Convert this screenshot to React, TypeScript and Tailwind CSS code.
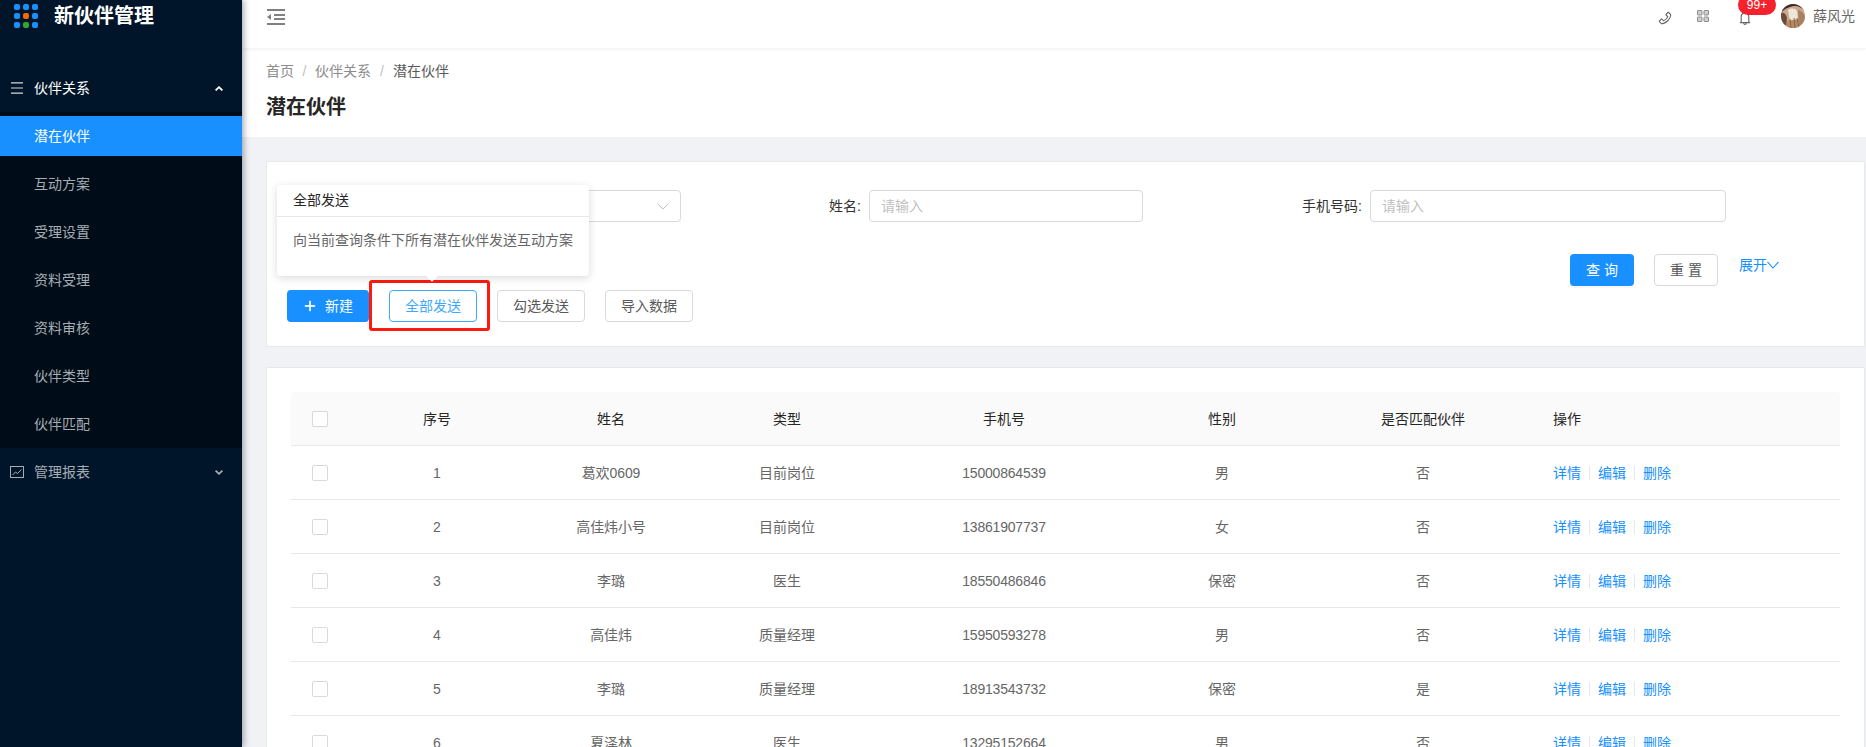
import { AiOutlineBell, AiOutlinePhone, AiOutlinePlus } from "react-icons/ai"

const menuItems = ["潜在伙伴", "互动方案", "受理设置", "资料受理", "资料审核", "伙伴类型", "伙伴匹配"]

const rows = [
  { id: 1, name: "葛欢0609", type: "目前岗位", phone: "15000864539", gender: "男", matched: "否" },
  { id: 2, name: "高佳炜小号", type: "目前岗位", phone: "13861907737", gender: "女", matched: "否" },
  { id: 3, name: "李璐", type: "医生", phone: "18550486846", gender: "保密", matched: "否" },
  { id: 4, name: "高佳炜", type: "质量经理", phone: "15950593278", gender: "男", matched: "否" },
  { id: 5, name: "李璐", type: "质量经理", phone: "18913543732", gender: "保密", matched: "是" },
  { id: 6, name: "夏泽林", type: "医生", phone: "13295152664", gender: "男", matched: "否" },
]

const logoDots = ["#1890ff", "#1890ff", "#1890ff", "#1890ff", "#f56a00", "#1890ff", "#1890ff", "#2ea82e", "#1890ff"]

function Arrow({ up }: { up?: boolean }) {
  return (
    <svg width="8" height="5" viewBox="0 0 8 5" fill="none" stroke="currentColor" strokeWidth="1.8">
      <path d={up ? "M.6 4.4 4 1.2 7.4 4.4" : "M.6.6 4 3.8 7.4.6"} />
    </svg>
  )
}

function Sidebar() {
  return (
    <aside className="relative z-10 w-[242px] shrink-0 bg-[#001529] shadow-[2px_0_6px_rgba(0,21,41,0.35)]">
      <div className="flex h-[64px] items-start pl-[14px] pt-[4px]">
        <div className="grid w-[24px] grid-cols-3 gap-[3px]">
          {logoDots.map((c, i) => (
            <span key={i} className="h-[6px] w-[6px] rounded-[2px]" style={{ background: c }} />
          ))}
        </div>
        <span className="ml-[16px] mt-[-2px] text-[20px] font-bold leading-[28px] text-white">新伙伴管理</span>
      </div>
      <div className="flex h-[48px] items-center pl-[11px] pr-[19px] text-white">
        <svg width="12" height="12" viewBox="0 0 12 12" fill="none" stroke="#d5d8db" strokeWidth="1.2">
          <path d="M0 .8h12M0 6h12M0 11.2h12" />
        </svg>
        <span className="ml-[11px] flex-1 text-[14px]">伙伴关系</span>
        <Arrow up />
      </div>
      <ul className="bg-[#000c17]">
        {menuItems.map((item, i) => (
          <li key={item} className="py-[4px]">
            <div className={`flex h-[40px] items-center pl-[34px] text-[14px] ${i === 0 ? "bg-[#1890ff] text-white" : "text-[#a6adb4]"}`}>
              {item}
            </div>
          </li>
        ))}
      </ul>
      <div className="flex h-[48px] items-center pl-[10px] pr-[19px] text-[#a6adb4]">
        <svg width="14" height="12" viewBox="0 0 14 12" fill="none" stroke="currentColor" strokeWidth="1">
          <rect x=".5" y=".5" width="13" height="11" />
          <path d="M2.5 9 5.5 6 7.5 7.5 11.5 3.5" />
        </svg>
        <span className="ml-[10px] flex-1 text-[14px]">管理报表</span>
        <Arrow />
      </div>
    </aside>
  )
}

function Avatar() {
  return (
    <svg width="24" height="24" viewBox="0 0 24 24" className="rounded-full">
      <rect width="24" height="24" fill="#c9a98c" />
      <path d="M0 0h24v7c-3-3-6-5-10-5S4 4 0 9z" fill="#3d2a2a" />
      <path d="M7 6c3-2 7-2 9 1l1 8-8 2z" fill="#efe6da" />
      <path d="M0 9c3-1 5 1 6 5l-1 10H0z" fill="#6b4a3c" />
      <path d="M17 6c4 1 7 4 7 9v9h-6z" fill="#a8805f" />
      <path d="M6 17l12-2 1 9H5z" fill="#b58a62" />
      <path d="M9 15l1 9M13 14l1 10M16 14l2 9" stroke="#8a6244" strokeWidth="1" fill="none" />
    </svg>
  )
}

function Header() {
  return (
    <header className="relative z-[5] flex h-[48px] shrink-0 items-start justify-between bg-white pl-[25px] pr-[11px] shadow-[0_1px_4px_rgba(0,21,41,0.08)]">
      <div className="flex h-[34px] items-center">
        <svg width="18" height="16" viewBox="0 0 18 16" fill="#808080">
          <rect width="18" height="2" />
          <rect y="14" width="18" height="2" />
          <rect x="7" y="5" width="11" height="2" />
          <rect x="7" y="9" width="11" height="2" />
          <path d="M0 8l4-3v6z" />
        </svg>
      </div>
      <div className="flex h-[32px] items-center text-[#666]">
        <AiOutlinePhone className="mt-[4px] h-[16px] w-[16px]" />
        <svg width="12" height="12" viewBox="0 0 12 12" fill="#cfcfcf" stroke="#8c8c8c" className="ml-[24px]">
          <rect x=".5" y=".5" width="4.5" height="4.5" rx=".5" />
          <rect x="7" y=".5" width="4.5" height="4.5" rx=".5" />
          <rect x=".5" y="7" width="4.5" height="4.5" rx=".5" />
          <rect x="7" y="7" width="4.5" height="4.5" rx=".5" />
        </svg>
        <div className="relative ml-[28px] mt-[4px] h-[16px] w-[16px]">
          <AiOutlineBell className="h-[16px] w-[16px]" />
          <span className="absolute left-[1px] top-[-15px] flex h-[20px] w-[38px] items-center justify-center rounded-full bg-[#f5222d] text-[12px] text-white">
            99+
          </span>
        </div>
        <div className="ml-[28px] h-[24px] w-[24px]">
          <Avatar />
        </div>
        <span className="ml-[8px] text-[14px] text-[#666]">薛风光</span>
      </div>
    </header>
  )
}

function Field({ label, width, outer }: { label: string; width: string; outer: string }) {
  return (
    <div className={`flex items-center justify-end ${outer}`}>
      <label className="mr-[8px] text-[14px] text-[#333]">{label}:</label>
      <input
        placeholder="请输入"
        className={`h-[32px] rounded-[4px] border border-[#d9d9d9] px-[11px] text-[14px] outline-none placeholder:text-[#bfbfbf] ${width}`}
      />
    </div>
  )
}

function FilterCard() {
  return (
    <section className="relative ml-[24px] mr-[1px] mt-[24px] rounded-[2px] border border-[#e8e8e8] bg-white pb-[24px] pt-[28px]">
      <div className="flex">
        <div className="flex w-[414px] justify-end">
          <div className="flex h-[32px] w-[288px] items-center justify-end rounded-[4px] border border-[#d9d9d9] pr-[11px] text-[#bfbfbf]">
            <svg width="12" height="7" viewBox="0 0 12 7" fill="none" stroke="currentColor" strokeWidth="1">
              <path d="M.5.5 6 6.2 11.5.5" />
            </svg>
          </div>
        </div>
        <Field label="姓名" width="w-[274px]" outer="w-[462px]" />
        <Field label="手机号码" width="w-[356px]" outer="w-[583px]" />
      </div>

      <div className="mt-[32px] flex justify-end pr-[85px]">
        <button className="h-[32px] w-[64px] rounded-[4px] bg-[#1890ff] text-[14px] text-white shadow-[0_2px_0_rgba(0,0,0,0.03)]">查 询</button>
        <button className="ml-[20px] h-[32px] w-[64px] rounded-[4px] border border-[#d9d9d9] bg-white text-[14px] text-[#595959]">重 置</button>
        <button className="ml-[21px] flex h-[22px] items-center text-[14px] text-[#1890ff]">
          展开
          <svg width="12" height="8" viewBox="0 0 12 8" fill="none" stroke="currentColor" strokeWidth="1.1">
            <path d="M.5.8 6 7 11.5.8" />
          </svg>
        </button>
      </div>

      <div className="mt-[4px] flex gap-[20px] pl-[20px]">
        <button className="flex h-[32px] w-[82px] items-center rounded-[4px] bg-[#1890ff] pl-[16px] text-[14px] text-white">
          <AiOutlinePlus className="h-[14px] w-[14px]" stroke="currentColor" strokeWidth={50} />
          <span className="ml-[8px]">新建</span>
        </button>
        <button className="h-[32px] w-[88px] rounded-[4px] border border-[#40a9ff] bg-white text-[14px] text-[#40a9ff]">全部发送</button>
        <button className="h-[32px] w-[88px] rounded-[4px] border border-[#d9d9d9] bg-white text-[14px] text-[#595959]">勾选发送</button>
        <button className="h-[32px] w-[88px] rounded-[4px] border border-[#d9d9d9] bg-white text-[14px] text-[#595959]">导入数据</button>
      </div>

      {/* 标注框 */}
      <div className="absolute left-[102px] top-[118px] h-[51px] w-[121px] rounded-[3px] border-[3px] border-[#ff1a10]" />

      <div className="absolute left-[10px] top-[23px] h-[91px] w-[312px] rounded-[4px] bg-white shadow-[0_2px_8px_rgba(0,0,0,0.15)]">
        <div className="flex h-[32px] items-center border-b border-[#e8e8e8] pl-[16px] text-[14px] text-[#262626]">全部发送</div>
        <div className="pl-[16px] pt-[12px] text-[14px] leading-[22px] text-[#666]">向当前查询条件下所有潜在伙伴发送互动方案</div>
        <span className="absolute bottom-[-4px] left-[151px] h-[8px] w-[8px] rotate-45 bg-white" />
      </div>
    </section>
  )
}

function DataTable() {
  return (
    <section className="ml-[24px] mr-[1px] mt-[20px] flex-1 rounded-[2px] border border-[#e8e8e8] bg-white px-[24px] pt-[24px]">
      <table className="w-full table-fixed text-[14px]">
        <thead>
          <tr className="h-[53px] border-b border-[#e8e8e8] bg-[#fafafa] text-[#262626] [&>th]:pt-[2px]">
            <th className="w-[96px] rounded-tl-[4px] pl-[21px] text-left font-normal">
              <span className="block h-[16px] w-[16px] rounded-[2px] border border-[#d9d9d9] bg-white" />
            </th>
            <th className="w-[100px] font-normal">序号</th>
            <th className="w-[248px] font-normal">姓名</th>
            <th className="w-[104px] font-normal">类型</th>
            <th className="w-[296px] pl-[34px] font-normal">手机号</th>
            <th className="w-[174px] font-normal">性别</th>
            <th className="w-[228px] font-normal">是否匹配伙伴</th>
            <th className="rounded-tr-[4px] pl-[16px] text-left font-normal">操作</th>
          </tr>
        </thead>
        <tbody>
          {rows.map((r) => (
            <tr key={r.id} className="h-[54px] border-b border-[#e8e8e8] text-center text-[#666] [&>td]:pt-[2px]">
              <td className="pl-[21px] text-left">
                <span className="block h-[16px] w-[16px] rounded-[2px] border border-[#d9d9d9] bg-white" />
              </td>
              <td>{r.id}</td>
              <td className="tracking-[-0.1px]">{r.name}</td>
              <td>{r.type}</td>
              <td className="pl-[34px] tracking-[-0.2px]">{r.phone}</td>
              <td>{r.gender}</td>
              <td>{r.matched}</td>
              <td className="pl-[16px] text-left text-[#1890ff]">
                <div className="flex items-center">
                  <a>详情</a>
                  <i className="mx-[8px] h-[14px] w-px bg-[#e8e8e8]" />
                  <a>编辑</a>
                  <i className="mx-[8px] h-[14px] w-px bg-[#e8e8e8]" />
                  <a>删除</a>
                </div>
              </td>
            </tr>
          ))}
        </tbody>
      </table>
    </section>
  )
}

export default function App() {
  return (
    <div className="flex h-[747px] overflow-hidden bg-[#f0f2f5] font-['Liberation_Sans','Noto_Sans_CJK_SC',sans-serif]">
      <Sidebar />
      <main className="flex min-w-0 flex-1 flex-col">
        <Header />
        <div className="h-[89px] shrink-0 bg-white pl-[24px] pt-[12px]">
          <div className="flex text-[14px] leading-[22px] text-[#8c8c8c]">
            <span>首页</span>
            <span className="w-[21px] text-center text-[#bfbfbf]">/</span>
            <span>伙伴关系</span>
            <span className="w-[22px] text-center text-[#bfbfbf]">/</span>
            <span className="text-[#595959]">潜在伙伴</span>
          </div>
          <h1 className="mt-[11px] text-[20px] font-bold leading-[28px] text-[#262626]">潜在伙伴</h1>
        </div>
        <FilterCard />
        <DataTable />
      </main>
    </div>
  )
}
